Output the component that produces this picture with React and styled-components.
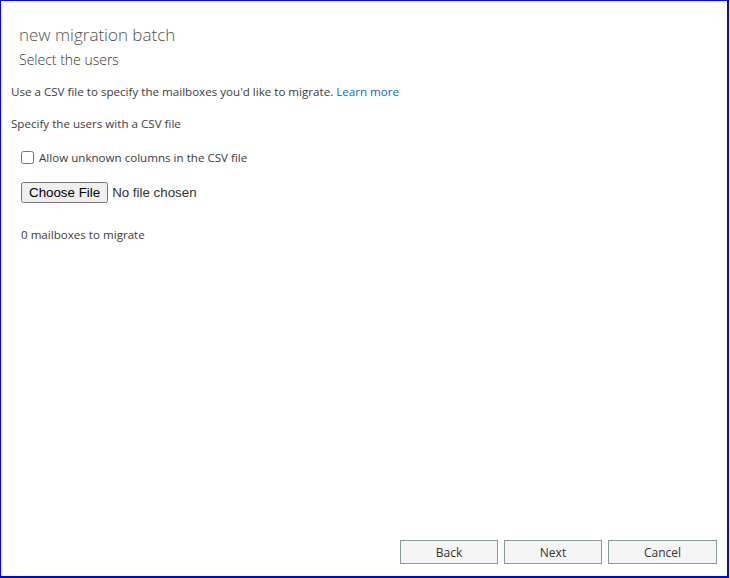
import styled, { createGlobalStyle } from "styled-components";

export default function App() {
  return (
    <>
      <GlobalStyle />
      <Frame>
        <Header>
          <Title>new migration batch</Title>
          <Subtitle>Select the users</Subtitle>
        </Header>
        <Body>
          <Text>
            Use a CSV file to specify the mailboxes you'd like to migrate.{" "}
            <Link href="#">Learn more</Link>
          </Text>
          <Text>Specify the users with a CSV file</Text>
          <Indent>
            <CheckRow>
              <input type="checkbox" />
              <span>Allow unknown columns in the CSV file</span>
            </CheckRow>
            <FileInput type="file" />
            <Text>0 mailboxes to migrate</Text>
          </Indent>
        </Body>
        <Footer>
          <FooterButton>Back</FooterButton>
          <FooterButton>Next</FooterButton>
          <FooterButton $wide>Cancel</FooterButton>
        </Footer>
      </Frame>
    </>
  );
}

/* STYLES */
const GlobalStyle = createGlobalStyle`
  html, body {
    margin: 0;
    background: #ffffff;
  }
`;

const Frame = styled.div`
  box-sizing: border-box;
  width: 729px;
  height: 578px;
  border-style: solid;
  border-color: #0000ff;
  border-width: 1px 2px 2px 1px;
  display: flex;
  flex-direction: column;
  font-family: "Open Sans", "Noto Sans", sans-serif;
  color: #333333;
`;

const Header = styled.div`
  padding: 22px 18px 0;
`;

const Title = styled.div`
  font-size: 17px;
  font-weight: 300;
  color: #505050;
  line-height: 24px;
`;

const Subtitle = styled.div`
  font-size: 14px;
  font-weight: 300;
  color: #333333;
  line-height: 22px;
  margin-top: 2px;
`;

const Body = styled.div`
  flex: 1;
  padding: 12px 10px 0;
  display: flex;
  flex-direction: column;
  gap: 15px;
`;

const Text = styled.div`
  font-size: 11.6px;
  line-height: 17px;
  color: #3c3c3c;
`;

const Link = styled.a`
  color: #0072c6;
  text-decoration: none;
`;

const Indent = styled.div`
  padding-left: 10px;
  margin-top: 3px;
  display: flex;
  flex-direction: column;
  align-items: flex-start;
  gap: 17px;
`;

const CheckRow = styled.label`
  display: flex;
  align-items: center;
  gap: 2px;
  font-size: 11.6px;
  color: #3c3c3c;

  input {
    margin: 0 3px 0 0;
    width: 13px;
    height: 13px;
  }
`;

const FileInput = styled.input`
  font-family: Arial, "Liberation Sans", sans-serif;
  font-size: 13.33px;
  margin-bottom: 6px;
`;

const Footer = styled.div`
  display: flex;
  justify-content: flex-end;
  gap: 6px;
  padding: 0 10px 12px 0;
`;

const FooterButton = styled.button`
  box-sizing: border-box;
  width: ${(p) => (p.$wide ? "109px" : "98px")};
  height: 24px;
  border: 1px solid #8a9a98;
  background: #f5f5f5;
  font-family: "Open Sans", "Noto Sans", sans-serif;
  font-size: 12px;
  color: #333333;
  padding: 0;
`;
